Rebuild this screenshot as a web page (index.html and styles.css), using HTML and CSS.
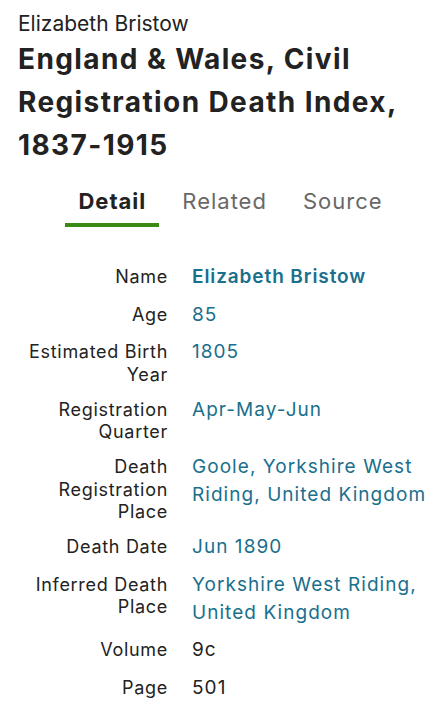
FILE: index.html
```html
<!DOCTYPE html>
<html lang="en">
<head>
<meta charset="utf-8">
<title>Elizabeth Bristow</title>
<link rel="stylesheet" href="styles.css">
</head>
<body>
<main class="page">
  <header class="record-header">
    <p class="person">Elizabeth Bristow</p>
    <h1 class="collection">England &amp; Wales, Civil Registration Death Index, 1837-1915</h1>
  </header>
  <nav class="tabs">
    <a class="tab active">Detail</a>
    <a class="tab">Related</a>
    <a class="tab">Source</a>
  </nav>
  <dl class="facts">
    <div class="fact"><dt>Name</dt><dd><a class="name-link">Elizabeth Bristow</a></dd></div>
    <div class="fact"><dt>Age</dt><dd><a>85</a></dd></div>
    <div class="fact"><dt>Estimated Birth Year</dt><dd><a>1805</a></dd></div>
    <div class="fact"><dt>Registration Quarter</dt><dd><a>Apr-May-Jun</a></dd></div>
    <div class="fact"><dt>Death Registration Place</dt><dd><a>Goole, Yorkshire West Riding, United Kingdom</a></dd></div>
    <div class="fact"><dt>Death Date</dt><dd><a>Jun 1890</a></dd></div>
    <div class="fact"><dt>Inferred Death Place</dt><dd><a>Yorkshire West Riding, United Kingdom</a></dd></div>
    <div class="fact"><dt>Volume</dt><dd>9c</dd></div>
    <div class="fact"><dt>Page</dt><dd>501</dd></div>
  </dl>
</main>
</body>
</html>
```
FILE: styles.css
```css
* { box-sizing: border-box; }
html, body { margin: 0; padding: 0; background: #fff; }
body {
  font-family: Inter, "Liberation Sans", Arial, sans-serif;
  color: #1f1f1f;
}
.page { padding: 10px 10px 20px 18px; }
.person {
  margin: 0;
  font-size: 21px;
  line-height: 27px;
  color: #222;
}
.collection {
  margin: 1px 0 0 0;
  font-size: 28px;
  line-height: 43px;
  font-weight: 700;
  color: #222;
  letter-spacing: 1.4px;
}
.tabs {
  display: flex;
  justify-content: center;
  gap: 10px;
  margin-top: 16px;
  padding-left: 6px;
}
.tab {
  display: block;
  padding: 0 13px 4px 13px;
  font-size: 22px;
  line-height: 36px;
  letter-spacing: 1px;
  color: #686868;
  border-bottom: 4px solid transparent;
}
.tab.active {
  font-weight: 700;
  color: #222;
  border-bottom-color: #3b8a16;
}
.facts { margin: 36px 0 0 0; }
.fact {
  display: grid;
  grid-template-columns: 150px 1fr;
  column-gap: 24px;
  align-items: baseline;
  margin-bottom: 9.5px;
}
.fact dt {
  text-align: right;
  font-size: 18px;
  line-height: 22.5px;
  letter-spacing: 0.7px;
  padding-top: 2.5px;
  color: #222;
}
.fact dd {
  margin: 0;
  font-size: 19px;
  line-height: 28px;
  letter-spacing: 1.05px;
  color: #222;
}
.fact dd a { color: #1a6f8c; }
.fact dd a.name-link { font-weight: 600; letter-spacing: 0.9px; }
```
